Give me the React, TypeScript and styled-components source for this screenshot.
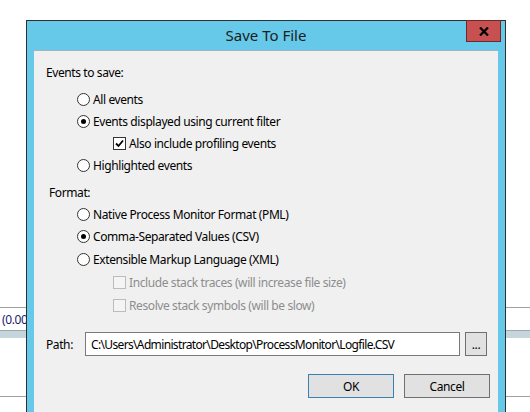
import React from "react";
import styled, { createGlobalStyle } from "styled-components";

const Global = createGlobalStyle`
  html, body { margin: 0; padding: 0; background: #ffffff; }
  body { font-family: "Noto Sans", "Open Sans", sans-serif; font-size: 12px; letter-spacing: -0.4px; color: #000; }
`;

const Desktop = styled.div`
  position: relative;
  width: 530px;
  height: 412px;
  overflow: hidden;
  background: #ffffff;
  display: flex;
  flex-direction: column;
`;

const BackSpacer = styled.div<{ $h: number }>`
  height: ${(p) => p.$h}px;
  flex: none;
`;

const BackRow = styled.div`
  height: 22px;
  border-top: 1px solid #a0a0a0;
  display: flex;
  align-items: center;
  padding-left: 2px;
  color: #1b1b6b;
  flex: none;
`;

const BackBar = styled.div`
  height: 7px;
  background: #c6d5dc;
  border-top: 1px solid #9aa9b0;
  flex: none;
`;

const BackLine = styled.div`
  border-top: 1px solid #a0a0a0;
  flex: none;
`;

const Window = styled.div`
  position: absolute;
  left: 26px;
  top: 20px;
  width: 478px;
  height: 420px;
  border: 1px solid #2f2f2f;
  background: #66c9e9;
  display: flex;
  flex-direction: column;
`;

const TitleBar = styled.div`
  height: 29px;
  display: flex;
  align-items: center;
  justify-content: center;
  font-size: 15px;
  letter-spacing: 0;
  color: #1c1c1c;
  flex: none;
  padding-bottom: 1px;
  box-sizing: border-box;
`;

const CloseButton = styled.div`
  position: absolute;
  top: -1px;
  right: 4px;
  width: 33px;
  height: 20px;
  background: #c75050;
  border: 1px solid #6e2a2a;
  display: flex;
  align-items: center;
  justify-content: center;
`;

const Client = styled.div`
  margin: 0 7px;
  flex: 1;
  background: #f0f0f0;
  border-top: 1px solid #9fb4bf;
  padding: 10px 0 0 12px;
  display: flex;
  flex-direction: column;
`;

const Row = styled.div<{ $h: number; $mt?: number; $indent?: number }>`
  height: ${(p) => p.$h}px;
  margin-top: ${(p) => p.$mt ?? 0}px;
  padding-left: ${(p) => p.$indent ?? 0}px;
  display: flex;
  align-items: center;
  flex: none;
`;

const Label = styled.span<{ $disabled?: boolean }>`
  color: ${(p) => (p.$disabled ? "#8d8d8d" : "#000")};
  white-space: nowrap;
`;

const RadioCircle = styled.span<{ $on?: boolean }>`
  width: 11px;
  height: 11px;
  border: 1px solid #333;
  border-radius: 50%;
  background: #fff;
  display: inline-flex;
  align-items: center;
  justify-content: center;
  margin-right: 3px;
  flex: none;
  &::after {
    content: "";
    width: 5px;
    height: 5px;
    border-radius: 50%;
    background: ${(p) => (p.$on ? "#000" : "transparent")};
  }
`;

const CheckBox = styled.span<{ $disabled?: boolean }>`
  width: 11px;
  height: 11px;
  border: 1px solid ${(p) => (p.$disabled ? "#bcbcbc" : "#333")};
  background: ${(p) => (p.$disabled ? "#f4f4f4" : "#fff")};
  display: inline-flex;
  align-items: center;
  justify-content: center;
  margin-right: 3px;
  flex: none;
`;

const PathLabel = styled.span`
  width: 39px;
  flex: none;
`;

const PathInput = styled.div`
  width: 368px;
  height: 22px;
  border: 1px solid #7a7a7a;
  background: #fff;
  display: flex;
  align-items: center;
  padding-left: 5px;
  box-sizing: content-box;
  flex: none;
  white-space: nowrap;
  overflow: hidden;
  letter-spacing: -0.65px;
`;

const Button = styled.div<{ $w: number; $default?: boolean; $ml?: number }>`
  width: ${(p) => p.$w}px;
  height: 22px;
  margin-left: ${(p) => p.$ml ?? 0}px;
  background: #e1e1e1;
  border: 1px solid ${(p) => (p.$default ? "#3c7fb1" : "#707070")};
  display: flex;
  align-items: center;
  justify-content: center;
  flex: none;
`;

const ButtonRow = styled.div`
  display: flex;
  align-items: center;
  margin-top: 18px;
  padding-left: 262px;
`;

const Radio = ({ on, children }: { on?: boolean; children: React.ReactNode }) => (
  <>
    <RadioCircle $on={on} />
    <Label>{children}</Label>
  </>
);

const Check = ({ checked, disabled, children }: { checked?: boolean; disabled?: boolean; children: React.ReactNode }) => (
  <>
    <CheckBox $disabled={disabled}>
      {checked && (
        <svg width="9" height="9" viewBox="0 0 9 9">
          <path d="M1 4.5 L3.5 7 L8 1.5" fill="none" stroke="#000" strokeWidth="1.8" />
        </svg>
      )}
    </CheckBox>
    <Label $disabled={disabled}>{children}</Label>
  </>
);

export default function App() {
  return (
    <>
      <Global />
      <Desktop>
        <BackSpacer $h={307} />
        <BackRow>(0.00</BackRow>
        <BackBar />
        <BackSpacer $h={58} />
        <BackLine />
        <Window>
          <TitleBar>Save To File</TitleBar>
          <CloseButton>
            <svg width="10" height="9" viewBox="0 0 10 9">
              <path d="M1 0.5 L9 8.5 M9 0.5 L1 8.5" stroke="#000" strokeWidth="2.2" />
            </svg>
          </CloseButton>
          <Client>
            <Row $h={22}>
              <Label>Events to save:</Label>
            </Row>
            <Row $h={22} $mt={5} $indent={31}>
              <Radio>All events</Radio>
            </Row>
            <Row $h={22} $indent={31}>
              <Radio on>Events displayed using current filter</Radio>
            </Row>
            <Row $h={22} $indent={67}>
              <Check checked>Also include profiling events</Check>
            </Row>
            <Row $h={23} $indent={31}>
              <Radio>Highlighted events</Radio>
            </Row>
            <Row $h={22} $mt={4} $indent={3}>
              <Label>Format:</Label>
            </Row>
            <Row $h={22} $indent={31}>
              <Radio>Native Process Monitor Format (PML)</Radio>
            </Row>
            <Row $h={23} $indent={31}>
              <Radio on>Comma-Separated Values (CSV)</Radio>
            </Row>
            <Row $h={23} $indent={31}>
              <Radio>Extensible Markup Language (XML)</Radio>
            </Row>
            <Row $h={23} $indent={67}>
              <Check disabled>Include stack traces (will increase file size)</Check>
            </Row>
            <Row $h={23} $indent={67}>
              <Check disabled>Resolve stack symbols (will be slow)</Check>
            </Row>
            <Row $h={24} $mt={15}>
              <PathLabel>Path:</PathLabel>
              <PathInput>C:\Users\Administrator\Desktop\ProcessMonitor\Logfile.CSV</PathInput>
              <Button $w={20} $ml={5}>...</Button>
            </Row>
            <ButtonRow>
              <Button $w={84} $default>OK</Button>
              <Button $w={84} $ml={10}>Cancel</Button>
            </ButtonRow>
          </Client>
        </Window>
      </Desktop>
    </>
  );
}
